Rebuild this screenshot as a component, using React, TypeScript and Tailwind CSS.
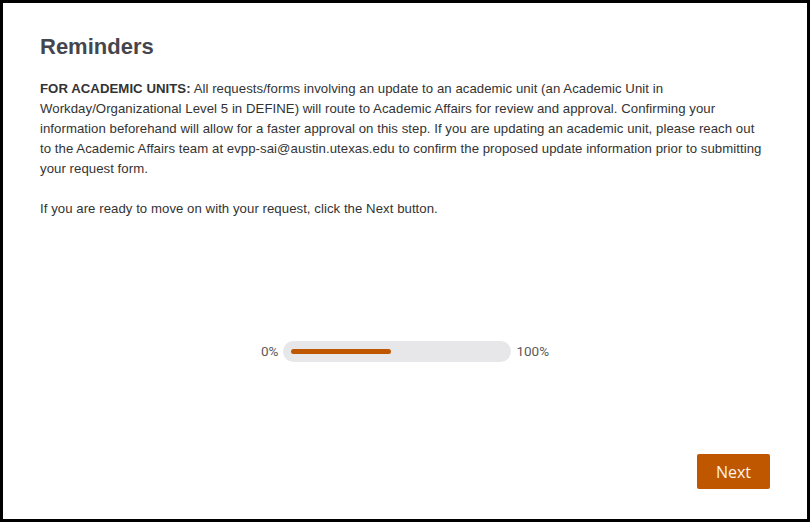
export default function App() {
  return (
    <div className="h-[522px] w-[810px] border-[3px] border-black bg-white font-['Liberation_Sans',Arial,sans-serif]">
      <div className="flex h-full flex-col px-[37px] pt-[31px] pb-[30px]">
        <h1 className="text-[22px] font-bold leading-[26px] text-[#45464d]">Reminders</h1>

        <div className="mt-[19px] pr-[6px] text-[13.2px] leading-5 tracking-[0.05px] text-[#333333]">
          <p>
            <strong>FOR ACADEMIC UNITS:</strong> All requests/forms involving an update to an academic unit (an
            Academic Unit in Workday/Organizational Level 5 in DEFINE) will route to Academic Affairs for review and
            approval. Confirming your information beforehand will allow for a faster approval on this step. If you are
            updating an academic unit, please reach out to the Academic Affairs team at evpp-sai@austin.utexas.edu to
            confirm the proposed update information prior to submitting your request form.
          </p>
          <p className="mt-5">If you are ready to move on with your request, click the Next button.</p>
        </div>

        <ProgressBar percent={47} />

        <div className="mt-auto flex justify-end">
          <button
            type="button"
            className="h-[35px] w-[73px] rounded-[2px] bg-[#bf5700] font-['Open_Sans',sans-serif] text-[16px] text-[#fdf3ea]"
          >
            Next
          </button>
        </div>
      </div>
    </div>
  );
}

function ProgressBar({ percent }: { percent: number }) {
  return (
    <div className="mt-[122px] flex items-center justify-center gap-[5px] font-['Roboto',sans-serif] text-[13.5px] text-[#5a5a5a]">
      <span>0%</span>
      <div className="flex h-[21px] w-[228px] items-center rounded-full bg-[#e7e7e9] px-[8px]">
        <div className="h-[5px] rounded-full bg-[#bf5700]" style={{ width: `${percent}%` }} />
      </div>
      <span>100%</span>
    </div>
  );
}
